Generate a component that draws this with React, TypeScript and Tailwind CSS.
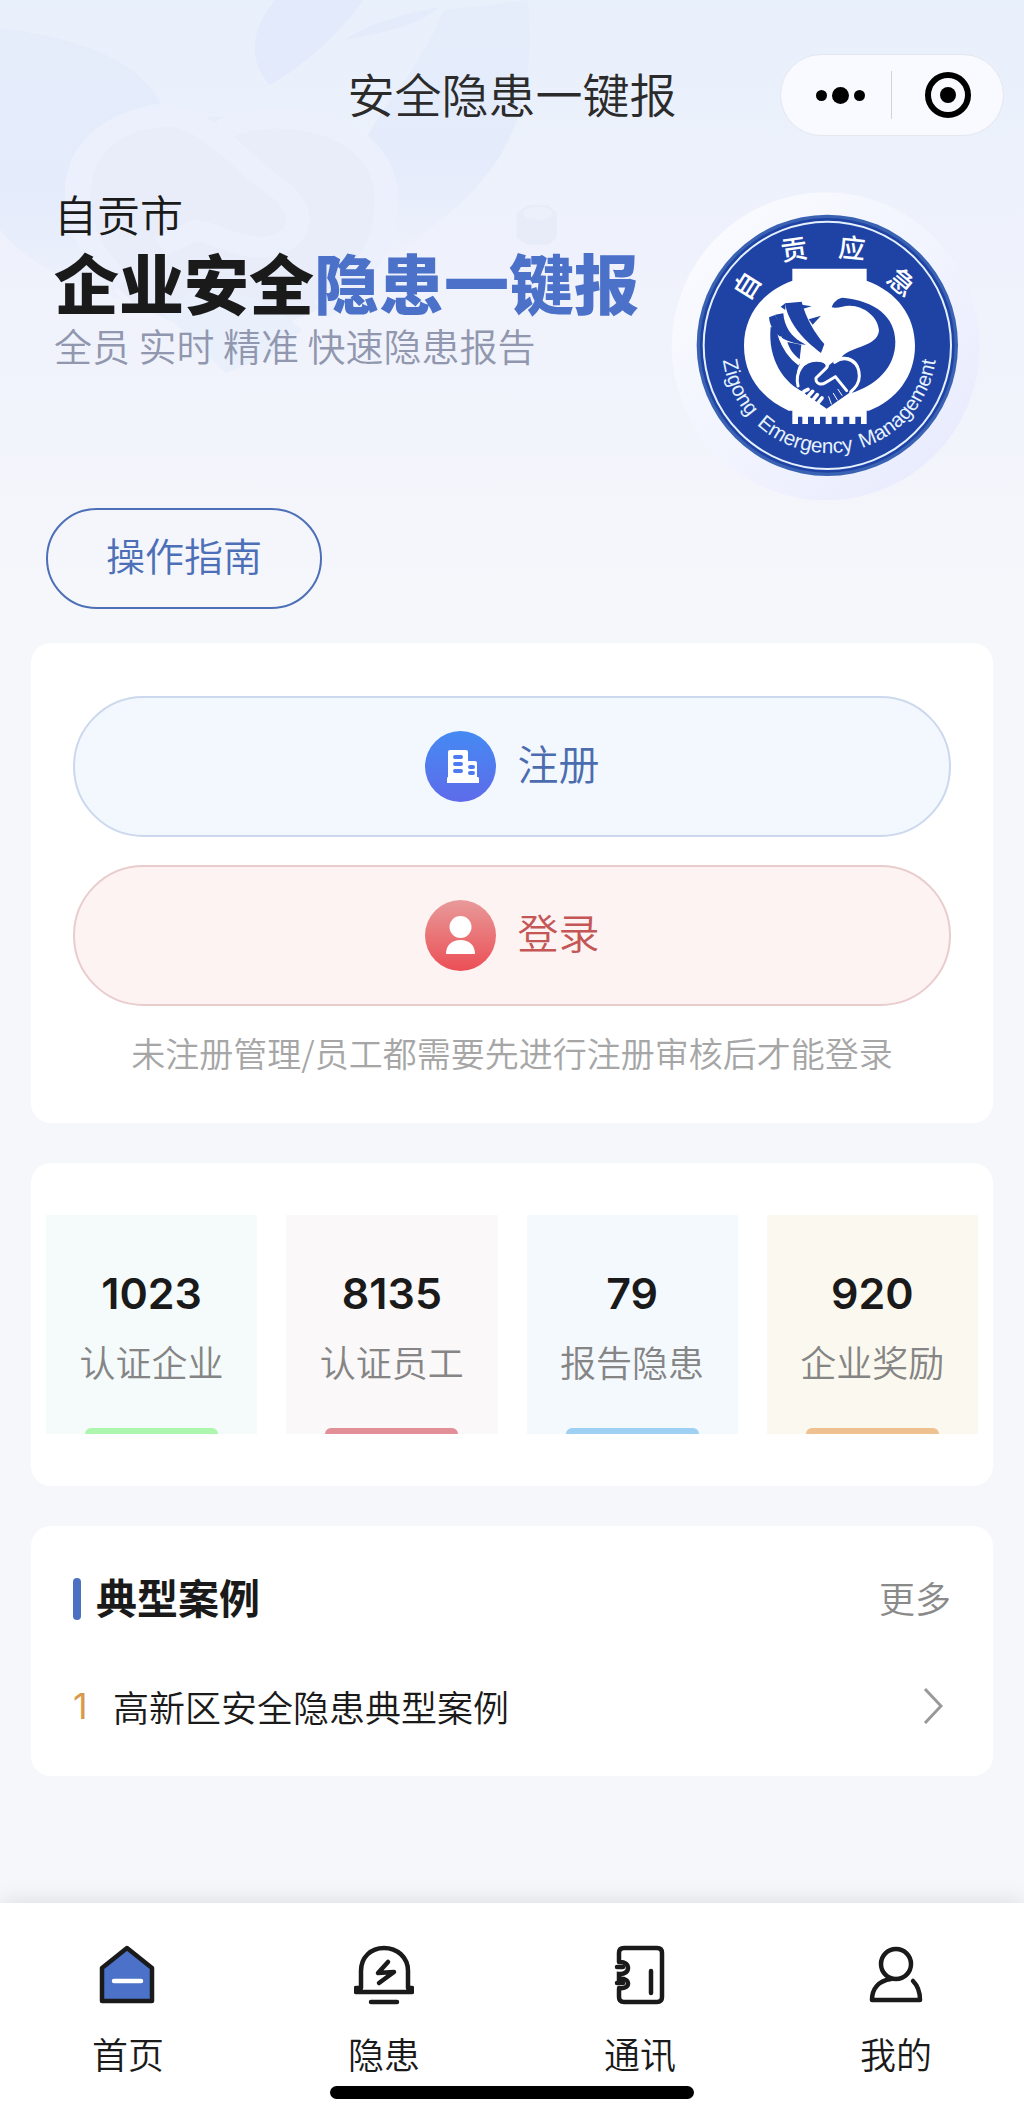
import React from 'react';

interface Stat {
    value: number;
    label: string;
    tile: string;
    bar: string;
}

interface Tab {
    label: string;
    icon: React.ReactNode;
}

const stats: Stat[] = [
    { value: 1023, label: '认证企业', tile: 'bg-[#f5fbfa]', bar: 'bg-[#adf6ad]' },
    { value: 8135, label: '认证员工', tile: 'bg-[#faf8f9]', bar: 'bg-[#e38f98]' },
    { value: 79, label: '报告隐患', tile: 'bg-[#f4f9fe]', bar: 'bg-[#9dd0f2]' },
    { value: 920, label: '企业奖励', tile: 'bg-[#fbf9ef]', bar: 'bg-[#efc090]' },
];

const cases: string[] = ['高新区安全隐患典型案例'];

const HeroBackdrop: React.FC = () => (
    <svg className="absolute top-0 left-0 h-[400px] w-[600px]" viewBox="0 0 1568 1200" preserveAspectRatio="none" fill="none" aria-hidden="true">
        <defs>
            <linearGradient id="wing" x1="0" y1="0" x2="0" y2="1">
                <stop offset="0" stopColor="#e5edfb" />
                <stop offset="0.6" stopColor="#e4ebfb" />
                <stop offset="1" stopColor="#edf1fb" />
            </linearGradient>
        </defs>
        <path d="M0 85C250 120 370 200 420 310C250 340 170 450 170 580C170 700 240 800 320 900C180 850 60 780 0 690Z" fill="url(#wing)" />
        <path d="M1160 30C1240 20 1320 10 1380 0C1390 200 1380 330 1300 480C1230 600 1130 690 1010 770C1050 640 1050 490 960 410C1010 300 1100 200 1160 30Z" fill="url(#wing)" />
        <path d="M720 0H950C880 110 790 200 705 255C650 190 650 90 720 0Z" fill="#e3eafb" />
        <path d="M1150 20C1060 40 960 70 900 120C990 100 1090 80 1150 20Z" fill="#e4ebfb" />
        <path d="M205 590C205 430 320 350 450 350H760C920 360 1010 460 1010 590C1010 740 930 850 830 930L600 1040L360 920C270 830 205 720 205 590Z" fill="#e8edf9" />
        <path d="M420 930L500 880C600 850 700 900 790 990L720 1060L590 1120Z" fill="#eaeffc" />
        <path
            d="M320 850C240 770 205 680 205 590C205 440 300 350 450 350C560 370 620 480 720 560C800 620 800 720 700 740C620 750 570 700 510 690L420 740"
            stroke="#ecf0fc"
            strokeWidth="62"
            strokeLinejoin="round"
        />
        <path d="M580 390C720 310 1010 360 1010 600C1010 760 930 850 840 930" stroke="#ecf0fc" strokeWidth="62" />
        <path d="M1350 640L1380 615H1430L1455 640V715L1430 735H1380L1350 715Z" fill="#e8ecf9" />
        <ellipse cx="1405" cy="640" rx="38" ry="20" fill="#ecf0fb" />
    </svg>
);

const Emblem: React.FC = () => (
    <svg className="size-80 shrink-0" viewBox="0 0 960 960" role="img" aria-label="自贡应急 Zigong Emergency Management">
        <defs>
            <linearGradient id="halo" x1="0" y1="0" x2="1" y2="1">
                <stop offset="0" stopColor="#fbfdff" />
                <stop offset="0.5" stopColor="#f2f4fe" />
                <stop offset="1" stopColor="#e6e9fd" />
            </linearGradient>
            <radialGradient id="glow">
                <stop offset="0.8" stopColor="#dfe2fd" />
                <stop offset="1" stopColor="#eff1fc" stopOpacity="0" />
            </radialGradient>
            <path id="arc" d="M189 541A322 322 0 0 0 827 541" />
        </defs>
        <circle cx="525" cy="525" r="434" fill="url(#glow)" />
        <circle cx="497" cy="499" r="462" fill="url(#halo)" />
        <circle cx="502" cy="496" r="392" fill="#3a62b2" />
        <circle cx="502" cy="496" r="382" fill="#1f43a5" />
        <circle cx="502" cy="496" r="371" fill="none" stroke="#e4f1fd" strokeWidth="6" />

        <g fill="#fff" fontSize="80" fontWeight="500" textAnchor="middle" className="font-['Noto_Sans_CJK_SC',sans-serif]">
            <text transform="translate(262 318) rotate(-58)" y="28">自</text>
            <text transform="translate(402 208) rotate(-8)" y="30">贡</text>
            <text transform="translate(576 204) rotate(6)" y="30">应</text>
            <text transform="translate(726 306) rotate(40)" y="30">急</text>
        </g>
        <g fill="#e6f2fd" fontSize="62" className="font-['Liberation_Sans',sans-serif]">
            <text><textPath href="#arc">Zigong</textPath></text>
            <text textAnchor="middle"><textPath href="#arc" startOffset="41%">Emergency</textPath></text>
            <text textAnchor="end"><textPath href="#arc" startOffset="100%">Management</textPath></text>
        </g>

        {/* Lantern */}
        <path
            d="M397 266H620V302C712 336 765 408 765 497C765 590 708 660 627 692H620V732H603V710H586V732H568V710H550V732H532V710H515V732H497V710H480V732H462V710H444V732H427V710H414V732H397V692H386C305 655 252 588 252 497C252 408 305 336 397 302Z"
            fill="#fff"
        />
        <g fill="#1f43a5">
            <path d="M515 382C520 365 535 355 548 353C645 362 706 410 706 485C706 562 650 615 572 640C603 610 610 565 585 542C572 530 558 530 545 530C575 498 652 500 657 452C655 410 612 378 570 377C552 376 535 386 515 382Z" />
            <path d="M332 440C322 540 375 612 432 636C404 605 408 570 420 552C385 530 355 490 350 450Z" />
            <path d="M375 370L425 365C438 415 465 460 493 492L483 519C430 480 385 430 375 370Z" />
            <path d="M327 412L345 405C365 445 398 475 438 494C390 492 332 470 327 412Z" />
            <path d="M345 404L370 400C372 440 395 470 425 488C385 470 360 440 345 404Z" />
            <path d="M382 486L424 494L419 538C400 524 388 506 382 486Z" />
            <path d="M425 374L455 379L430 386Z" />
            <path d="M446 418L483 407L458 434Z" />
            <path d="M362 380L376 370V390Z" />
        </g>
        <path d="M360 470C372 510 392 535 418 553" fill="none" stroke="#fff" strokeWidth="8" />
        {/* Handshake */}
        <path
            d="M504 560C478 530 428 540 415 580C408 615 425 632 440 645L500 686L572 636C600 618 602 590 594 565C578 525 530 528 504 560Z"
            fill="#1f43a5"
        />
        <g fill="none" stroke="#fff" strokeLinecap="round" strokeLinejoin="round">
            <path d="M524 547C560 520 598 548 598 588C598 612 584 624 572 636" strokeWidth="9" />
            <path d="M414 618C404 575 430 540 470 541C500 541 508 556 497 566L468 594C466 612 484 616 496 608L526 590L560 632" strokeWidth="9" />
            <path d="M432 634L444 628M442 652L458 634M454 666L472 644M470 674L486 654" strokeWidth="11" />
            <path d="M520 640L532 660M506 650L514 672M534 628L546 646" strokeWidth="3" />
        </g>
    </svg>
);

const HomeIcon = (
    <svg className="size-[60px]" viewBox="0 0 60 60" fill="none" strokeWidth="4.500" strokeLinejoin="round" strokeLinecap="round">
        <path d="M29 3L54 23V56H4V23Z" fill="#4c71c9" stroke="#1a1a1a" />
        <path d="M16 36H43" stroke="#fff" />
    </svg>
);

const AlarmIcon = (
    <svg className="size-[60px]" viewBox="0 0 60 60" fill="none" stroke="#1a1a1a" strokeWidth="4.500" strokeLinejoin="round" strokeLinecap="round">
        <path d="M7 43V26C7 12 17 3 30 3S54 12 54 26V43H58V47H2V43Z" />
        <path d="M34 17L24 28L40 27L25 38M17 57H43" />
    </svg>
);

const ContactsIcon = (
    <svg className="size-[60px]" viewBox="0 0 60 60" fill="none" stroke="#1a1a1a" strokeWidth="4.500" strokeLinecap="round">
        <path d="M9 17V8Q9 3 14 3H47Q52 3 52 8V52Q52 57 47 57H14Q9 57 9 52V44M9 17C21 16 21 30 9 29V34C21 32 21 45 9 43" />
        <path d="M7 22H13M7 38H13M41 26V48" />
    </svg>
);

const ProfileIcon = (
    <svg className="size-[60px]" viewBox="0 0 60 60" fill="none" stroke="#1a1a1a" strokeWidth="4.500" strokeLinejoin="round" strokeLinecap="round">
        <circle cx="30" cy="19" r="15" />
        <path d="M25 34C12 36 6 44 6 55H54C54 48 52 41 47 36" />
    </svg>
);

const tabs: Tab[] = [
    { label: '首页', icon: HomeIcon },
    { label: '隐患', icon: AlarmIcon },
    { label: '通讯', icon: ContactsIcon },
    { label: '我的', icon: ProfileIcon },
];

const App: React.FC = () => {
    return (
        <div className="relative flex min-h-screen flex-col bg-[#f5f7fb] font-['Noto_Sans_CJK_SC',sans-serif] font-[350] text-[#1a1a1a]">
            <div className="absolute inset-x-0 top-0 h-[600px] bg-linear-to-b from-[#e8f0fb] via-[#f0f2fc] to-[#f5f7fb]">
                <HeroBackdrop />
            </div>

            {/* Title bar */}
            <header className="relative grid grid-cols-[1fr_auto_1fr] items-center px-5 pt-[54px]">
                <h1 className="col-start-2 pb-1 text-[47px] leading-[78px] text-[#2b2b2b]">安全隐患一键报</h1>
                <div className="grid h-[82px] w-56 grid-cols-2 items-center justify-self-end rounded-full border border-[#e4e7ef] bg-[#f9faff]">
                    <button type="button" aria-label="更多操作" className="flex h-12 items-center justify-center gap-[5px] border-r border-[#d0d2d9] pl-2">
                        <span className="size-[11px] rounded-full bg-black"></span>
                        <span className="size-[17px] rounded-full bg-black"></span>
                        <span className="size-[11px] rounded-full bg-black"></span>
                    </button>
                    <button type="button" aria-label="关闭" className="flex items-center justify-center">
                        <span className="flex size-[46px] items-center justify-center rounded-full border-[6px] border-black">
                            <span className="size-4 rounded-full bg-black"></span>
                        </span>
                    </button>
                </div>
            </header>

            <main className="relative flex-1">
                <section className="flex justify-between pt-11 pr-11 pl-[54px]">
                    <div className="pt-2 whitespace-nowrap">
                        <p className="text-[43px] leading-[50px]">自贡市</p>
                        <h2 className="text-[65px] leading-[86px] font-black">
                            企业安全<span className="text-[#4c71c9]">隐患一键报</span>
                        </h2>
                        <p className="text-[38px] leading-[42px] text-[#9097ae]">全员 实时 精准 快速隐患报告</p>
                    </div>
                    <Emblem />
                </section>

                <button type="button" className="mt-2 ml-[46px] h-[101px] w-[276px] rounded-full border-2 border-[#4c6fb8] pb-2 text-[39px] text-[#4c6fb8]">
                    操作指南
                </button>

                <div className="mt-[34px] flex flex-col gap-10 px-[31px]">
                    {/* Register and login */}
                    <section className="rounded-[20px] bg-white px-[42px] pt-[53px] pb-[45px]">
                        <div className="flex flex-col gap-7">
                            <button type="button" className="flex h-[141px] items-center justify-center gap-[22px] rounded-full border-2 border-[#cbd8ed] bg-[#f3f7fe] text-[41px] text-[#4c6cb0]">
                                <svg className="size-[71px]" viewBox="0 0 71 71" aria-hidden="true">
                                    <defs>
                                        <linearGradient id="blue" x1="0" y1="0" x2="0" y2="1">
                                            <stop stopColor="#458af3" />
                                            <stop offset="1" stopColor="#5e6bea" />
                                        </linearGradient>
                                    </defs>
                                    <circle cx="35.500" cy="35.500" r="35.500" fill="url(#blue)" />
                                    <path d="M23 21Q23 19 25 19H41Q43 19 43 21V30H50Q52 30 52 32V46H53Q54 46 54 48V52H22V48Q22 46 23 46Z" fill="#fff" />
                                    <path d="M30 26H36M30 33H36M30 40H36M45 36H48M45 42H48" stroke="#4e7cf0" strokeWidth="4" strokeLinecap="round" />
                                </svg>
                                <span className="pb-2">注册</span>
                            </button>
                            <button type="button" className="flex h-[141px] items-center justify-center gap-[22px] rounded-full border-2 border-[#e9cdcd] bg-[#fdf3f2] text-[41px] text-[#c45656]">
                                <svg className="size-[71px]" viewBox="0 0 71 71" aria-hidden="true">
                                    <defs>
                                        <linearGradient id="red" x1="0" y1="0" x2="0" y2="1">
                                            <stop stopColor="#e89a9a" />
                                            <stop offset="1" stopColor="#eb4f55" />
                                        </linearGradient>
                                    </defs>
                                    <circle cx="35.500" cy="35.500" r="35.500" fill="url(#red)" />
                                    <circle cx="35.500" cy="27" r="11" fill="#fff" />
                                    <path d="M21 54C21 45 27 40 35.500 40S50 45 50 54Z" fill="#fff" />
                                </svg>
                                <span className="pb-2">登录</span>
                            </button>
                        </div>
                        <p className="mt-[22px] text-center text-[34px] leading-[50px] text-[#a6a6a6]">
                            未注册管理/员工都需要先进行注册审核后才能登录
                        </p>
                    </section>

                    {/* Stats */}
                    <section className="grid grid-cols-4 gap-[29px] rounded-[20px] bg-white px-[15px] py-[52px]">
                        {stats.map((stat) => (
                            <div key={stat.label} className={`flex h-[219px] flex-col items-center ${stat.tile}`}>
                                <p className="mt-[50px] font-[Inter,sans-serif] text-[43px] leading-[56px] font-semibold">{stat.value}</p>
                                <p className="mt-[17px] text-[36px] leading-[46px] text-[#858585]">{stat.label}</p>
                                <div className={`mt-auto h-1.5 w-[133px] rounded-t-md ${stat.bar}`}></div>
                            </div>
                        ))}
                    </section>

                    {/* Typical cases */}
                    <section className="rounded-[20px] bg-white px-[42px] pt-12 pb-10">
                        <div className="flex items-center justify-between leading-[46px]">
                            <div className="flex items-center gap-[15px]">
                                <span className="h-[42px] w-2 rounded-sm bg-[#4c71c0]"></span>
                                <h2 className="pb-1.5 text-[41px] leading-[44px] font-bold">典型案例</h2>
                            </div>
                            <a href="#cases" className="pb-1 text-[36px] text-[#8a8a8a]">更多</a>
                        </div>
                        <ul className="mt-[52px]">
                            {cases.map((title, index) => (
                                <li key={title}>
                                    <a href="#case" className="flex items-center text-[36px] leading-[60px]">
                                        <span className="w-10 font-[Inter,sans-serif] font-normal text-[#d99a4e]">{index + 1}</span>
                                        <span>{title}</span>
                                        <svg className="mr-2 ml-auto h-9 w-5" viewBox="0 0 20 36" fill="none" stroke="#999" strokeWidth="3" aria-hidden="true">
                                            <path d="M2 1L18 18L2 35" />
                                        </svg>
                                    </a>
                                </li>
                            ))}
                        </ul>
                    </section>
                </div>
            </main>

            {/* Tab bar */}
            <nav className="relative bg-white pt-[42px] pb-5 shadow-[0_0_24px_rgba(0,0,0,0.12)]">
                <div className="grid grid-cols-4">
                    {tabs.map((tab) => (
                        <a key={tab.label} href="#tab" className="flex flex-col items-center gap-[22px] text-[36px] leading-[52px]">
                            {tab.icon}
                            <span>{tab.label}</span>
                        </a>
                    ))}
                </div>
                <div className="mx-auto mt-[7px] h-[13px] w-[364px] rounded-full bg-black"></div>
            </nav>
        </div>
    );
};

export default App;
